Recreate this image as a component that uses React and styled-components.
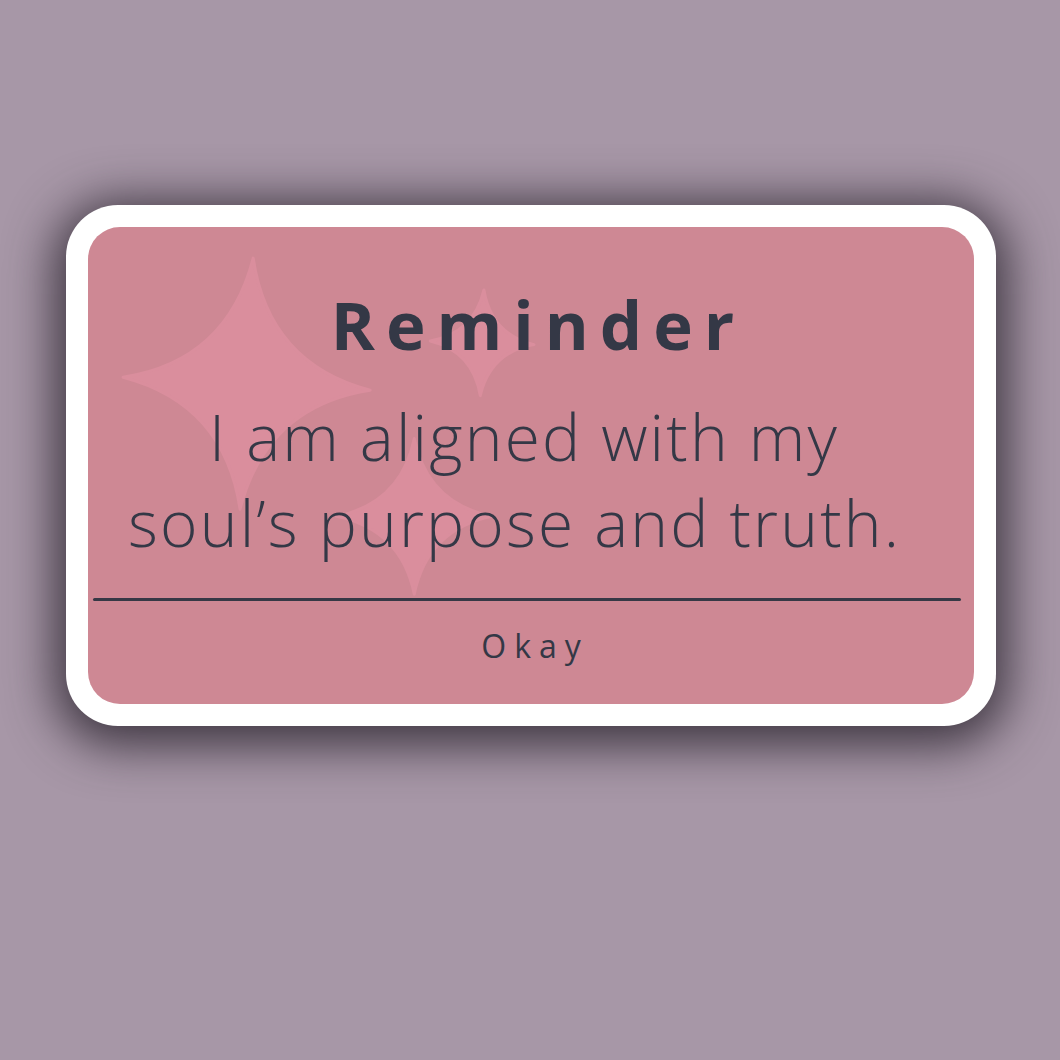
import React from "react";
import styled, { createGlobalStyle } from "styled-components";

const GlobalStyle = createGlobalStyle`
  html, body {
    margin: 0;
    padding: 0;
    background: #a797a7;
  }
  * {
    box-sizing: border-box;
  }
`;

const Page = styled.div`
  width: 1060px;
  height: 1060px;
  padding: 205px 0 0 66px;
  background: #a797a7;
  font-family: "Open Sans", "DejaVu Sans", sans-serif;
  color: #343846;
`;

const Sticker = styled.div`
  width: 930px;
  height: 521px;
  padding: 22px;
  background: #ffffff;
  border-radius: 52px;
  box-shadow: 0 8px 48px 12px rgba(45, 38, 48, 0.85);
`;

const Card = styled.div`
  position: relative;
  height: 100%;
  display: flex;
  flex-direction: column;
  background: #ce8894;
  border-radius: 32px;
  overflow: hidden;
`;

const Sparkles = styled.svg`
  position: absolute;
  left: 0;
  top: 0;
  width: 100%;
  height: 100%;
  pointer-events: none;
`;

const Content = styled.div`
  position: relative;
  z-index: 1;
  padding: 57px 0 32px;
  text-align: center;
`;

const Title = styled.h1`
  margin: 0;
  font-size: 67px;
  line-height: 80px;
  font-weight: 700;
  letter-spacing: 11px;
  padding-left: 14px;
`;

const Message = styled.p`
  margin: 30px 0 0;
  font-size: 64px;
  line-height: 86px;
  font-weight: 350;
  letter-spacing: 2.2px;
  white-space: pre;
  padding-right: ${({ shift }) => shift || 0}px;
`;

const Divider = styled.div`
  position: relative;
  z-index: 1;
  height: 3px;
  margin: 0 13px 0 5px;
  background: #363845;
  border-radius: 2px;
`;

const Footer = styled.div`
  flex: 1;
  display: flex;
  align-items: center;
  justify-content: center;
  padding: 0 0 14px 8px;
  font-size: 32px;
  font-weight: 500;
  letter-spacing: 8px;
`;

const star = (cx, cy, rx, ry, rot = 0) => {
  const c = 0.17;
  const pts = [
    [0, -1],
    [c, -c],
    [1, 0],
    [c, c],
    [0, 1],
    [-c, c],
    [-1, 0],
    [-c, -c],
  ].map(([x, y]) => [x * rx, y * ry]);
  const [a, b, d, e, f, g, h, i] = pts.map(([x, y]) => `${x.toFixed(1)},${y.toFixed(1)}`);
  return {
    d: `M${a} Q${b} ${d} Q${e} ${f} Q${g} ${h} Q${i} ${a} Z`,
    transform: `translate(${cx} ${cy}) rotate(${rot})`,
  };
};

const stars = [
  star(159, 157, 124, 126, 3),
  star(395, 116, 52, 53, 2),
  star(327, 290, 78, 78, 0),
];

function App() {
  return (
    <>
      <GlobalStyle />
      <Page>
        <Sticker>
          <Card>
            <Sparkles viewBox="0 0 888 478">
              {stars.map((s, i) => (
                <path key={i} d={s.d} transform={s.transform} fill="#da8e9d" strokeLinejoin="round" stroke="#da8e9d" strokeWidth="3" />
              ))}
            </Sparkles>
            <Content>
              <Title>Reminder</Title>
              <Message shift={14}>
                {"I am aligned with my\nsoul’s purpose and truth.\u00a0"}
              </Message>
            </Content>
            <Divider />
            <Footer>Okay</Footer>
          </Card>
        </Sticker>
      </Page>
    </>
  );
}

export default App;
